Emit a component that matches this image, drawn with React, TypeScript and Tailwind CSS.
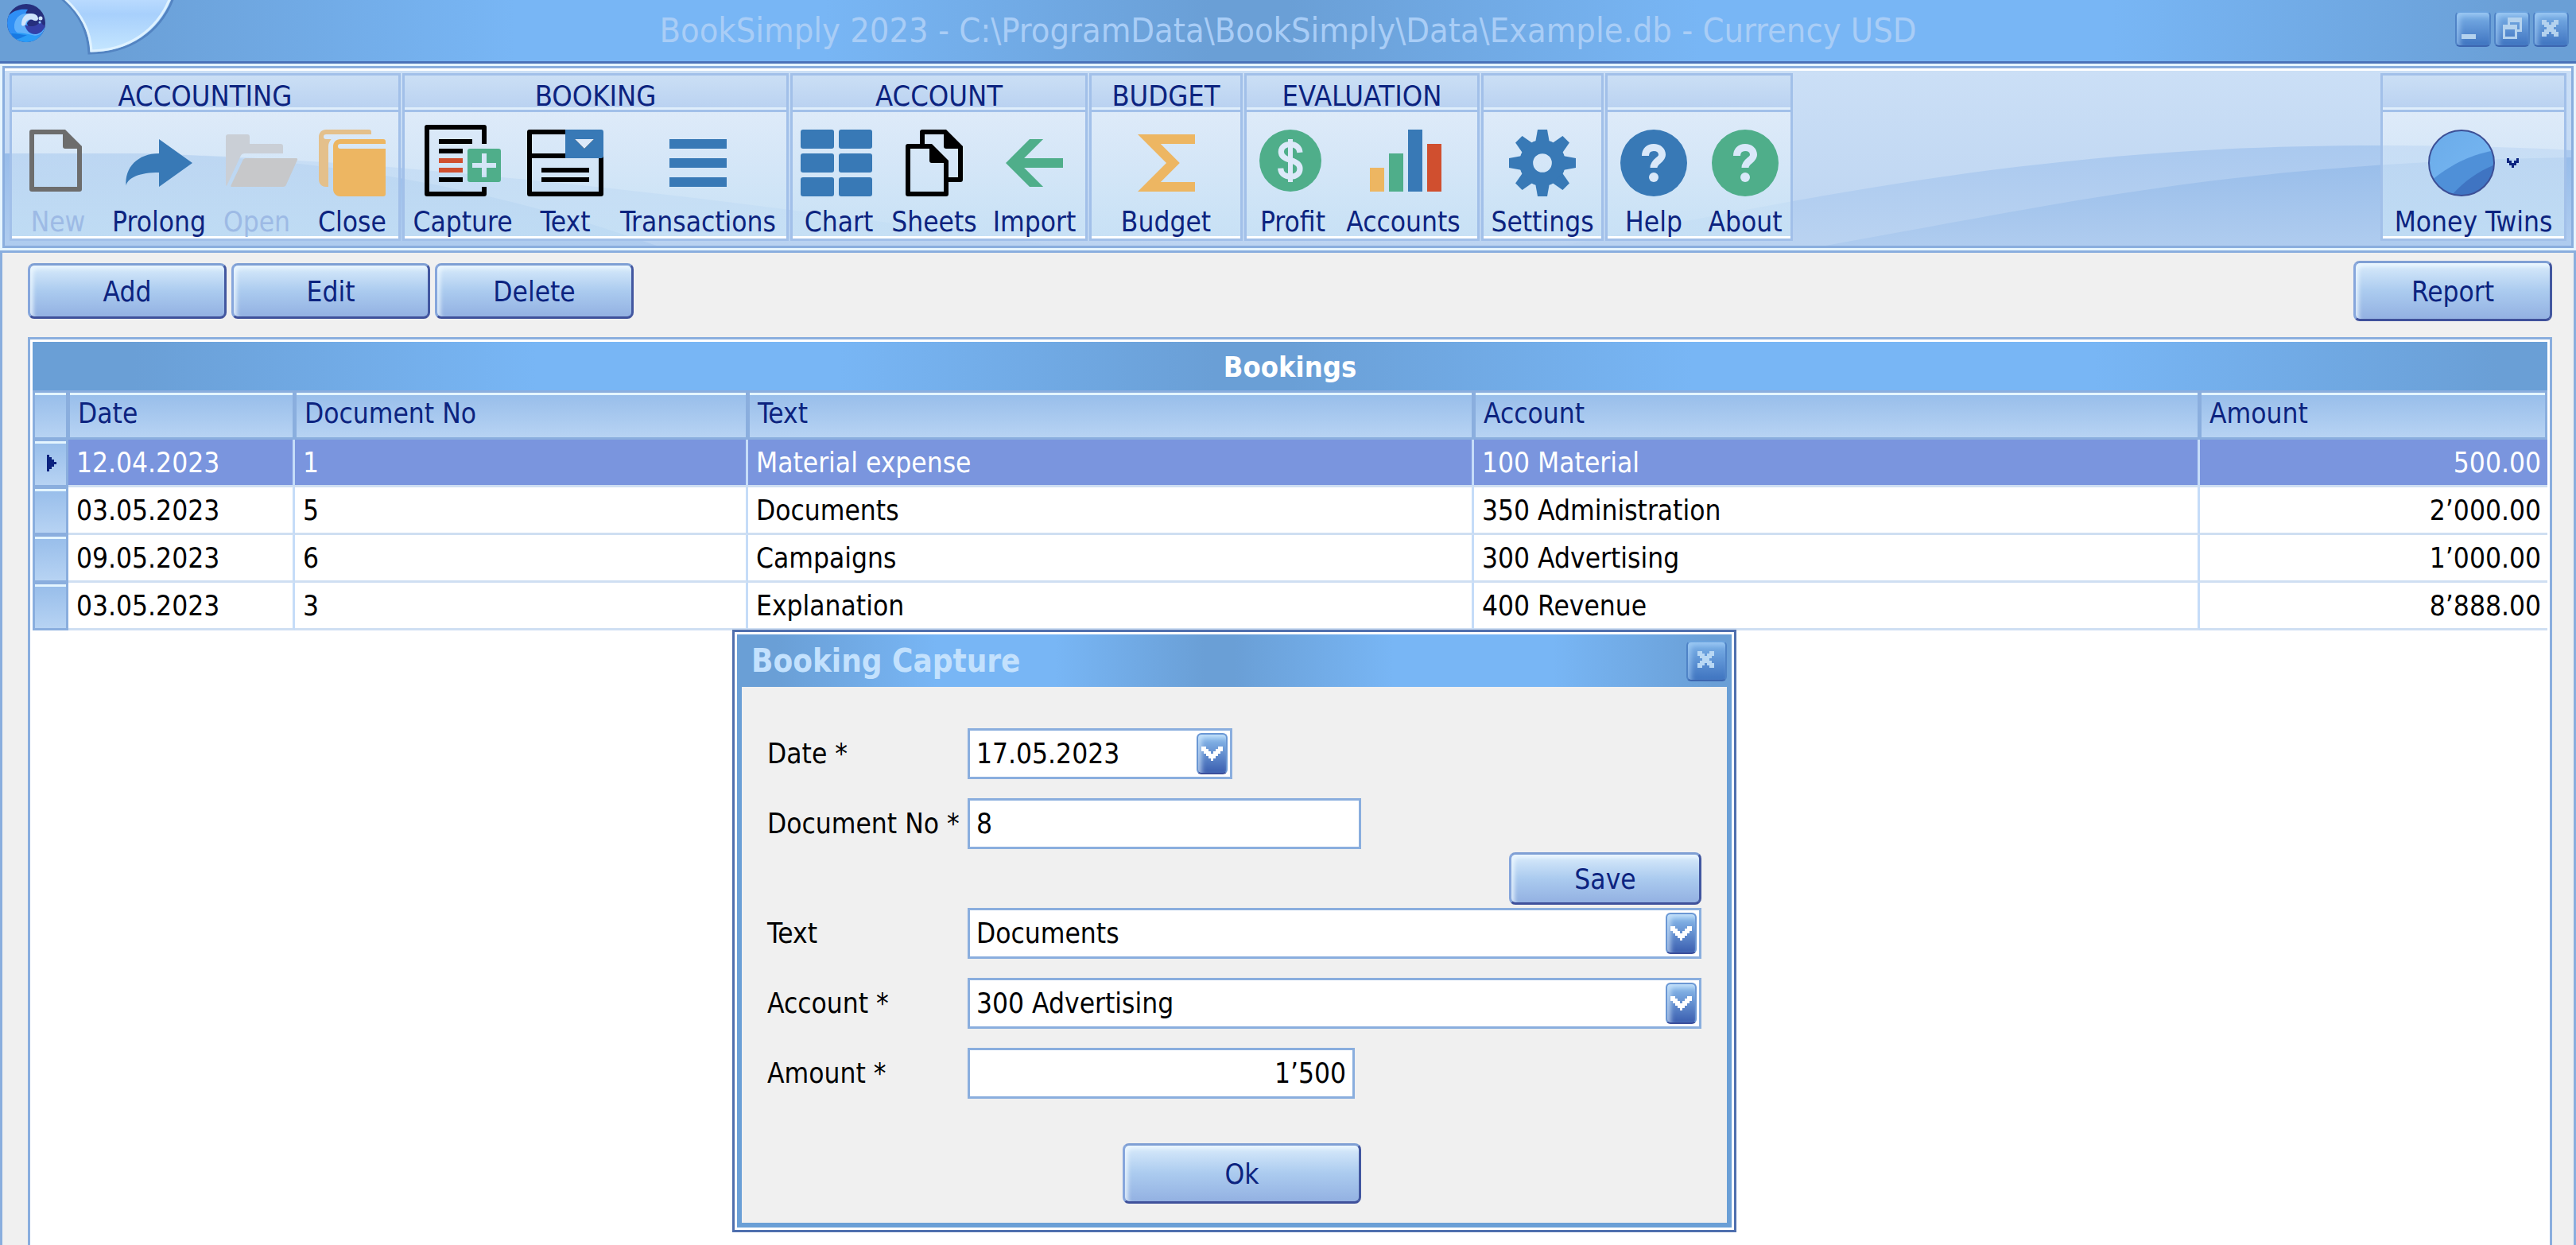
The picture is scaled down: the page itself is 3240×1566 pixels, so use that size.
import type { ReactNode } from "react";
import clsx from "clsx";

interface Tool {
  label: string;
  icon: ReactNode;
  className: string;
  disabled?: boolean;
}

interface ToolGroup {
  title: string;
  tools: Tool[];
}

interface Booking {
  id: number;
  date: string;
  documentNo: string;
  text: string;
  account: string;
  amount: string;
}

const BLUE = "#3879b6";
const GREEN = "#4fae8a";
const RED = "#d04f2f";
const YELLOW = "#edb662";

function Icon({ children }: { children: ReactNode }) {
  return (
    <svg
      viewBox="0 0 32 32"
      className="size-24 shrink-0 overflow-visible"
      aria-hidden="true"
    >
      {children}
    </svg>
  );
}

function NewIcon() {
  return (
    <Icon>
      <path
        fill="#6d6d6d"
        fillRule="evenodd"
        d="M5 2h14l7 7v18a1 1 0 0 1-1 1H5a1 1 0 0 1-1-1V3a1 1 0 0 1 1-1zM6 4v22h18V10h-5a1 1 0 0 1-1-1V4z"
      />
    </Icon>
  );
}

function ProlongIcon() {
  return (
    <Icon>
      <path
        fill={BLUE}
        d="M16 6l14 10-14 10v-6C8 20 3 22 2.2 25.500C1.500 18 7 12 16 12z"
      />
    </Icon>
  );
}

function OpenIcon() {
  return (
    <Icon>
      <path
        fill="#cacfd6"
        d="M4 4h8a1 1 0 0 1 1 1v3h13a1 1 0 0 1 1 1v3H11a2 2 0 0 0-1.800 1.100L3.400 25.500H3V5a1 1 0 0 1 1-1z"
      />
      <path
        fill="#c7c8ca"
        d="M11.400 14h21.100c.6 0 .7.300.400.900l-4.600 10.300c-.3.600-.6.800-1.300.800H5.600c-.5 0-.6-.2-.4-.700l4.900-10.400c.3-.6.6-.9 1.300-.9z"
      />
    </Icon>
  );
}

function CloseIcon() {
  return (
    <Icon>
      <path
        fill="#e4c08b"
        d="M5 2h18a1 1 0 0 1 1 1v1H5a1 1 0 0 0 0 2h2.200C6.400 7 6 8 6 9v17H5c-2 0-3-1.600-3-3V5c0-1.700 1.300-3 3-3z"
      />
      <path
        fill={YELLOW}
        d="M11 6h18a1 1 0 0 1 1 1v1H11a1 1 0 0 0 0 2h19v19a1 1 0 0 1-1 1H11c-2 0-3-1.600-3-3V9c0-1.700 1.300-3 3-3z"
      />
    </Icon>
  );
}

function CaptureIcon() {
  return (
    <Icon>
      <path
        d="M26 8V1a1 1 0 0 0-1-1H1a1 1 0 0 0-1 1v28a1 1 0 0 0 1 1h24a1 1 0 0 0 1-1v-3h-2v2H2V2h22v6z"
        fill="#000"
      />
      <path fill="#000" d="M6 6h14v2H6zM6 10h10v2H6zM6 22h10v2H6z" />
      <path fill={RED} d="M6 14h10v2H6zM6 18h10v2H6z" />
      <path
        fill={GREEN}
        fillRule="evenodd"
        d="M19 10h12a1 1 0 0 1 1 1v12a1 1 0 0 1-1 1H19a1 1 0 0 1-1-1V11a1 1 0 0 1 1-1zM24 12v4h-4v2h4v4h2v-4h4v-2h-4v-4z"
      />
    </Icon>
  );
}

function TextIcon() {
  return (
    <Icon>
      <path
        fill="#000"
        fillRule="evenodd"
        d="M1 2h30v27a1 1 0 0 1-1 1H1a1 1 0 0 1-1-1V3a1 1 0 0 1 1-1zM2 4v8h14V4zM2 14v14h28V14z"
      />
      <path fill="#000" d="M30 12h2v17a1 1 0 0 1-1 1h-1zM6 18h20v2H6zM6 22h20v2H6z" />
      <path
        fill={BLUE}
        fillRule="evenodd"
        d="M16 2h15a1 1 0 0 1 1 1v10a1 1 0 0 1-1 1H16zM20 6l4 4 4-4z"
      />
      <path fill="#dce9f9" d="M20 6l4 4 4-4z" />
    </Icon>
  );
}

function TransactionsIcon() {
  return (
    <Icon>
      <path fill={BLUE} d="M4 6h24v4H4zM4 14h24v4H4zM4 22h24v4H4z" />
    </Icon>
  );
}

function ChartIcon() {
  return (
    <Icon>
      {[2, 12, 22].map((y) => (
        <g key={y} fill={BLUE}>
          <rect x="0" y={y} width="14" height="8" rx="1" />
          <rect x="16" y={y} width="14" height="8" rx="1" />
        </g>
      ))}
    </Icon>
  );
}

function SheetsIcon() {
  return (
    <Icon>
      <path
        fill="#000"
        d="M11 2h10l7 7v14a1 1 0 0 1-1 1h-5v-2h4V10h-5a1 1 0 0 1-1-1V4h-8v4h-2V3a1 1 0 0 1 1-1z"
      />
      <path
        fill="#000"
        fillRule="evenodd"
        d="M5 8h10l7 7v14a1 1 0 0 1-1 1H5a1 1 0 0 1-1-1V9a1 1 0 0 1 1-1zM6 10v18h14V16h-5a1 1 0 0 1-1-1v-5z"
      />
    </Icon>
  );
}

function ImportIcon() {
  return (
    <Icon>
      <path fill={GREEN} d="M4 16L14 6h5.700l-8 8H28v4H11.700l8 8H14z" />
    </Icon>
  );
}

function BudgetIcon() {
  return (
    <Icon>
      <path fill={YELLOW} d="M4 4h24v4H13.600l8 8-8 8H28v4H4l12-12z" />
    </Icon>
  );
}

function ProfitIcon() {
  return (
    <Icon>
      <circle cx="15" cy="15" r="13" fill={GREEN} />
      <g fill="none" stroke="#dce9f9" strokeWidth="2.400">
        <path d="M19 11.600c-.2-2.200-1.700-3.400-4-3.400s-3.900 1.100-3.900 3.100c0 1.900 1.400 2.800 3.900 3.500s4 1.600 4 3.600-1.600 3.300-4 3.300-4-1.300-4.100-3.500" />
        <path strokeWidth="2" d="M15 6v18" />
      </g>
    </Icon>
  );
}

function AccountsIcon() {
  return (
    <Icon>
      <path fill={YELLOW} d="M2 18h6v10H2z" />
      <path fill={GREEN} d="M10 12h6v16h-6z" />
      <path fill={BLUE} d="M18 2h6v26h-6z" />
      <path fill={RED} d="M26 8h6v20h-6z" />
    </Icon>
  );
}

function SettingsIcon() {
  return (
    <Icon>
      <circle cx="16" cy="16" r="6.800" fill="none" stroke={BLUE} strokeWidth="5.700" />
      {[0, 45, 90, 135, 180, 225, 270, 315].map((angle) => (
        <path
          key={angle}
          fill={BLUE}
          d="M14 2h4l.9 5h-5.800z"
          transform={`rotate(${angle} 16 16)`}
        />
      ))}
    </Icon>
  );
}

function QuestionIcon({ color }: { color: string }) {
  return (
    <Icon>
      <circle cx="16" cy="16" r="14" fill={color} />
      <path
        d="M12.500 13c0-2.300 1.400-3.500 3.500-3.500s3.500 1.200 3.500 3.100c0 2.300-3.500 2.500-3.500 5.400"
        fill="none"
        stroke="#d9e8f9"
        strokeWidth="3"
      />
      <circle cx="16" cy="22" r="2" fill="#d9e8f9" />
    </Icon>
  );
}

function OrbIcon() {
  return (
    <svg viewBox="0 0 84 84" className="size-[84px]" aria-hidden="true">
      <defs>
        <linearGradient id="orb-base" x1="0" y1="0" x2="1" y2="1">
          <stop offset="0" stopColor="#6aabe9" />
          <stop offset="1" stopColor="#79b9f4" />
        </linearGradient>
        <clipPath id="orb-clip">
          <circle cx="42" cy="42" r="41" />
        </clipPath>
      </defs>
      <g clipPath="url(#orb-clip)">
        <rect width="84" height="84" fill="url(#orb-base)" />
        <path d="M4 64C26 46 50 32 84 26v58H4z" fill="#4f90d8" />
        <path d="M30 82C46 64 64 52 84 44v40z" fill="#3f74c2" />
      </g>
      <circle cx="42" cy="42" r="41" fill="none" stroke="#3c4f96" strokeWidth="2" />
    </svg>
  );
}

function AppLogo() {
  return (
    <svg viewBox="0 0 48 48" className="size-12" aria-hidden="true">
      <defs>
        <clipPath id="logo-clip">
          <circle cx="24" cy="24" r="24" />
        </clipPath>
      </defs>
      <g clipPath="url(#logo-clip)">
        <rect width="48" height="48" fill="#262f7d" />
        <path d="M0 16C8 8 16 6 26 7c-4 4-4 12 0 20 2 8 14 10 22 2v19H0z" fill="#2f8ff5" />
        <path d="M9 30c-1-12 8-19 17-18 6 0 10 1 12 4-8 2-14 6-14 12s4 11 12 10c4 0 8-3 11-7-2 6-8 9-14 9-12 1-23-2-24-10z" fill="#61b1fb" />
        <path d="M22 26c2 8 7 12 14 12 6-1 10-5 12-11-4 0-4-3-6-5-4 6-12 8-20 4z" fill="#3540a8" />
        <path d="M18 26c0-8 4-14 12-14 6 0 9 3 9 7-1 3-4 2-5 2-5-3-10-1-11 5-2 2-4 2-5 0z" fill="#cfe4fb" />
        <path d="M5 37c10-2 22 1 30 3 4 1 8-1 11-4-4 8-12 12-22 12C16 48 9 44 5 37z" fill="#2b9cf7" />
        <path d="M5 37c8 0 14 2 20 2-6 3-10 5-14 5-3-2-5-4-6-7z" fill="#1779e2" />
        <circle cx="42" cy="18" r="2.500" fill="#cfe4fb" />
        <circle cx="41" cy="23" r="1.500" fill="#8fc6fb" />
      </g>
    </svg>
  );
}

const groups: ToolGroup[] = [
  {
    title: "ACCOUNTING",
    tools: [
      { label: "New", icon: <NewIcon />, className: "w-[116px]", disabled: true },
      { label: "Prolong", icon: <ProlongIcon />, className: "w-[138px]" },
      { label: "Open", icon: <OpenIcon />, className: "w-[108px]", disabled: true },
      { label: "Close", icon: <CloseIcon />, className: "ml-2 w-[116px]" },
    ],
  },
  {
    title: "BOOKING",
    tools: [
      { label: "Capture", icon: <CaptureIcon />, className: "w-[146px]" },
      { label: "Text", icon: <TextIcon />, className: "w-[112px]" },
      { label: "Transactions", icon: <TransactionsIcon />, className: "w-[222px]" },
    ],
  },
  {
    title: "ACCOUNT",
    tools: [
      { label: "Chart", icon: <ChartIcon />, className: "w-[116px]" },
      { label: "Sheets", icon: <SheetsIcon />, className: "w-[124px]" },
      { label: "Import", icon: <ImportIcon />, className: "w-[128px]" },
    ],
  },
  {
    title: "BUDGET",
    tools: [{ label: "Budget", icon: <BudgetIcon />, className: "w-[187px]" }],
  },
  {
    title: "EVALUATION",
    tools: [
      { label: "Profit", icon: <ProfitIcon />, className: "w-[116px]" },
      { label: "Accounts", icon: <AccountsIcon />, className: "mr-3 w-[162px]" },
    ],
  },
  {
    title: "",
    tools: [{ label: "Settings", icon: <SettingsIcon />, className: "w-[148px]" }],
  },
  {
    title: "",
    tools: [
      { label: "Help", icon: <QuestionIcon color={BLUE} />, className: "w-[116px]" },
      { label: "About", icon: <QuestionIcon color={GREEN} />, className: "w-[114px]" },
    ],
  },
];

const bookings: Booking[] = [
  { id: 1, date: "12.04.2023", documentNo: "1", text: "Material expense", account: "100 Material", amount: "500.00" },
  { id: 2, date: "03.05.2023", documentNo: "5", text: "Documents", account: "350 Administration", amount: "2’000.00" },
  { id: 3, date: "09.05.2023", documentNo: "6", text: "Campaigns", account: "300 Advertising", amount: "1’000.00" },
  { id: 4, date: "03.05.2023", documentNo: "3", text: "Explanation", account: "400 Revenue", amount: "8’888.00" },
];

const titleGradient =
  "bg-[linear-gradient(to_right,#6a9fd6_0%,#6a9fd6_4%,#78b6f5_20%,#78b6f5_32%,#6a9fd6_47%,#6a9fd6_50%,#78b6f5_66%,#78b6f5_82%,#6a9fd6_98%)]";

const selectedId = 1;

function GroupBox({ title, children }: { title: string; children: ReactNode }) {
  return (
    <section className="border-3 border-[#a2c0e9]">
      <h2 className="h-[43px] border-b-3 border-[#dfeefb] bg-linear-to-b from-[#cbdff5] to-[#bad2f1] pt-2 text-center text-4xl leading-9">
        {title}
      </h2>
      <div className="flex h-[162px] border-t-3 border-b-3 border-t-[#a2c0e9] border-b-white bg-linear-to-b from-white/40 to-[#d5f0fa]/45 pt-4">
        {children}
      </div>
    </section>
  );
}

function ToolButton({ tool }: { tool: Tool }) {
  return (
    <button
      type="button"
      disabled={tool.disabled}
      className={clsx(
        "flex flex-col items-center disabled:text-[#9dbae5]",
        tool.className
      )}
    >
      {tool.icon}
      <span className="mt-1 text-[35px] leading-11 whitespace-nowrap">{tool.label}</span>
    </button>
  );
}

function PushButton({ label, className }: { label: string; className: string }) {
  return (
    <button
      type="button"
      className={clsx(
        "rounded-lg border-3 border-t-[#7f9fd4] border-r-[#4257a0] border-b-[#3f519b] border-l-[#86a6dc] bg-linear-to-b from-[#d9ebfb] via-[#abcbef] to-[#93b1e2] pt-0.5 text-[35px] leading-10 text-[#0c237f] shadow-[inset_4px_4px_5px_rgba(240,250,255,0.75)]",
        className
      )}
    >
      {label}
    </button>
  );
}

function WindowButton({ label, className, children }: { label: string; className: string; children: ReactNode }) {
  return (
    <button
      type="button"
      aria-label={label}
      className={clsx(
        "flex items-center justify-center rounded-md border-2 border-[#4f83c6] border-t-[#6ba3de] border-b-[#3c66b0] bg-linear-to-b from-[#7db2e8] to-[#3f74c0] shadow-[inset_4px_4px_6px_rgba(175,215,250,0.6)]",
        className
      )}
    >
      <svg viewBox="0 0 14 14" className="size-[42px] shrink-0" shapeRendering="crispEdges" aria-hidden="true">
        {children}
      </svg>
    </button>
  );
}

const crossPixels =
  "M3 3h2v1h1v1h1V4h1V3h2v2H9v1H8v1h1v1h1v2H8V9H7V8H6v1H5v1H3V8h1V7h1V6H4V5H3z";

function DropGlyph() {
  return (
    <span className="flex h-[52px] w-[39px] items-center justify-center rounded-md border-2 border-[#6a97d4] border-b-[#3b4f9c] bg-linear-to-b from-[#8fc0ee] to-[#3c5fb0] shadow-[inset_4px_4px_6px_rgba(220,240,255,0.7)]">
      <svg viewBox="0 0 9 6" className="h-[18px] w-[27px]" shapeRendering="crispEdges" aria-hidden="true">
        <path d="M0 0h2v1h1v1h1v1h1V2h1V1h1V0h2v2H8v1H7v1H6v1H5v1H4V5H3V4H2V3H1V2H0z" fill="#fff" />
      </svg>
    </span>
  );
}

function FieldRow({ id, label, className, children }: { id: string; label: string; className?: string; children: ReactNode }) {
  return (
    <div className={clsx("flex items-center", className)}>
      <label htmlFor={id} className="w-[252px] shrink-0 whitespace-nowrap">
        {label}
      </label>
      {children}
    </div>
  );
}

function SelectField({ id, options, value }: { id: string; options: string[]; value: string }) {
  return (
    <div className="relative grow">
      <select
        id={id}
        defaultValue={value}
        className="h-16 w-full appearance-none border-3 border-[#8aaede] bg-white px-2 text-black"
      >
        {options.map((option) => (
          <option key={option}>{option}</option>
        ))}
      </select>
      <span className="pointer-events-none absolute top-1.5 right-1.5">
        <DropGlyph />
      </span>
    </div>
  );
}

function BookingDialog() {
  return (
    <div
      role="dialog"
      aria-labelledby="capture-title"
      className="absolute top-[792px] left-[921px] w-[1263px] border-3 border-[#4f6fae] bg-white p-[3px] text-[35px] text-black"
    >
      <div className="border-6 border-t-0 border-[#6a9fd6]">
        <div className={clsx("-mx-1.5 flex h-[66px] items-center justify-between pr-1.5 pl-[18px]", titleGradient)}>
          <h2 id="capture-title" className="text-[40px] font-bold text-[#c3e1fd]">
            Booking Capture
          </h2>
          <WindowButton label="Close dialog" className="size-[51px]">
            <path d={crossPixels} fill="#b9d8f4" />
          </WindowButton>
        </div>
        <form className="flex flex-col bg-[#f0f0f0] px-8 pt-[52px] pb-6" onSubmit={(e) => e.preventDefault()}>
          <FieldRow id="date" label="Date *">
            <div className="flex h-16 w-[333px] items-center justify-between border-3 border-[#8aaede] bg-white pr-[3px]">
              <input id="date" defaultValue="17.05.2023" className="w-60 bg-transparent px-2 outline-none" />
              <button type="button" aria-label="Open calendar">
                <DropGlyph />
              </button>
            </div>
          </FieldRow>
          <FieldRow id="documentNo" label="Document No *" className="mt-6">
            <input
              id="documentNo"
              defaultValue="8"
              className="h-16 w-[495px] border-3 border-[#8aaede] bg-white px-2"
            />
          </FieldRow>
          <PushButton label="Save" className="mt-1 h-[66px] w-[242px] self-end" />
          <FieldRow id="text" label="Text" className="mt-1">
            <SelectField id="text" value="Documents" options={bookings.map((b) => b.text)} />
          </FieldRow>
          <FieldRow id="account" label="Account *" className="mt-6">
            <SelectField id="account" value="300 Advertising" options={bookings.map((b) => b.account)} />
          </FieldRow>
          <FieldRow id="amount" label="Amount *" className="mt-6">
            <input
              id="amount"
              defaultValue="1’500"
              className="h-16 w-[487px] border-3 border-[#8aaede] bg-white px-2 text-right"
            />
          </FieldRow>
          <div className="mt-14 flex w-[747px] justify-end">
            <PushButton label="Ok" className="h-[76px] w-[300px]" />
          </div>
        </form>
      </div>
    </div>
  );
}

const headCell =
  "border-t-3 border-b-3 border-r-3 border-l-2 border-[#8aaede] bg-linear-to-b from-[#97bdea] to-[#b7d3f3] px-2.5 pb-1 text-left font-normal text-[#0c237f] shadow-[inset_0_3px_0_#e4f5ff]";

function BookingsTable() {
  return (
    <div className="grow border-3 border-b-0 border-[#8aaede] bg-white px-[3px] pt-[3px]">
      <h1
        id="bookings-title"
        className={clsx("flex h-[61px] items-center justify-center pt-0.5 text-4xl font-bold text-white", titleGradient)}
      >
        Bookings
      </h1>
      <table aria-labelledby="bookings-title" className="w-full table-fixed border-separate border-spacing-0 text-[35px] leading-10">
        <colgroup>
          <col className="w-[45px]" />
          <col className="w-[285px]" />
          <col className="w-[570px]" />
          <col className="w-[913px]" />
          <col className="w-[913px]" />
          <col />
        </colgroup>
        <thead>
          <tr className="h-[62px]">
            <td className="border-3 border-[#8aaede] bg-linear-to-b from-[#97bdea] to-[#b7d3f3] shadow-[inset_0_3px_0_#e4f5ff]" />
            <th className={headCell}>Date</th>
            <th className={headCell}>Document No</th>
            <th className={headCell}>Text</th>
            <th className={headCell}>Account</th>
            <th className={headCell}>Amount</th>
          </tr>
        </thead>
        <tbody>
          {bookings.map((b) => {
            const selected = b.id === selectedId;
            const cell = clsx(
              "border-b-3 border-r-[#c5dcf8] border-b-[#cfdff2] pl-2.5",
              selected ? "bg-[#7a95de] text-white" : "bg-white text-black"
            );
            return (
              <tr key={b.id} className="h-[60px]">
                <td className="border-x-3 border-t-2 border-b-3 border-[#8aaede] bg-linear-to-b from-[#97bdea] to-[#b7d3f3] shadow-[inset_0_3px_0_#e4f5ff]">
                  {selected && (
                    <svg viewBox="0 0 4 7" className="ml-[15px] h-[21px] w-3" shapeRendering="crispEdges" aria-hidden="true">
                      <path d="M0 0h1v1h1v1h1v1h1v1H3v1H2v1H1v1H0z" fill="#0c237f" />
                    </svg>
                  )}
                </td>
                <td className={clsx(cell, "border-r-3")}>{b.date}</td>
                <td className={clsx(cell, "border-r-3")}>{b.documentNo}</td>
                <td className={clsx(cell, "border-r-3")}>{b.text}</td>
                <td className={clsx(cell, "border-r-3")}>{b.account}</td>
                <td className={clsx(cell, "pr-2 text-right")}>{b.amount}</td>
              </tr>
            );
          })}
        </tbody>
      </table>
    </div>
  );
}

function TitleBar() {
  return (
    <header className={clsx("relative flex h-20 items-center border-b-3 border-[#4a72b8] pr-[9px] pb-1 pl-[9px]", titleGradient)}>
      <div className="w-36 pb-4">
        <AppLogo />
      </div>
      <svg viewBox="0 0 150 70" className="absolute top-0 left-[74px] h-[70px] w-[150px]" aria-hidden="true">
        <defs>
          <linearGradient id="swoosh" x1="0" y1="0" x2="0" y2="1">
            <stop offset="0" stopColor="#bcdcff" />
            <stop offset="0.300" stopColor="#a8d0fc" />
            <stop offset="1" stopColor="#c6e7ff" />
          </linearGradient>
        </defs>
        <path d="M2 -3C26 16 37 40 38 67C90 67 128 40 144 -3z" fill="url(#swoosh)" stroke="#5384c2" strokeWidth="3" />
        <path d="M6 -3C30 18 40 42 41 64C88 63 124 38 140 -3z" fill="none" stroke="#dff2ff" strokeWidth="3" />
      </svg>
      <p className="grow pt-1 text-center text-[43px] leading-none text-[#a9cdf6]">
        BookSimply 2023 - C:\ProgramData\BookSimply\Data\Example.db - Currency USD
      </p>
      <div className="flex w-36 justify-end gap-1">
        <WindowButton label="Minimize" className="size-[45px]">
          <path d="M2 9h6v2H2z" fill="#b4d2ee" />
        </WindowButton>
        <WindowButton label="Restore" className="size-[45px]">
          <path
            fill="#b4d2ee"
            fillRule="evenodd"
            d="M5 2h6v6H9v3H3V5h2zM6 4v1h3v2h1V4zM4 7v3h4V7z"
          />
        </WindowButton>
        <WindowButton label="Close" className="size-[45px]">
          <path d={crossPixels} fill="#b4d2ee" />
        </WindowButton>
      </div>
    </header>
  );
}

// Soft waves behind the ribbon groups
function RibbonWaves() {
  return (
    <svg
      viewBox="0 0 3228 220"
      preserveAspectRatio="none"
      className="absolute inset-0 h-full w-full"
      aria-hidden="true"
    >
      <defs>
        <linearGradient id="wave-back" x1="0" y1="0" x2="0" y2="1">
          <stop offset="0" stopColor="#aac9ef" />
          <stop offset="1" stopColor="#bad3f1" />
        </linearGradient>
        <linearGradient id="wave-front" x1="0" y1="0" x2="0" y2="1">
          <stop offset="0" stopColor="#98bdea" />
          <stop offset="1" stopColor="#afccef" />
        </linearGradient>
      </defs>
      <path d="M0 104H170C500 112 900 160 1320 220H0z" fill="url(#wave-back)" />
      <path d="M0 104H170C420 110 620 150 820 220H0z" fill="url(#wave-front)" />
      <path d="M1960 220C2400 130 2650 94 2988 94C3080 94 3160 96 3228 100V220z" fill="url(#wave-back)" />
      <path d="M2290 220C2600 165 2800 116 3228 109V220z" fill="url(#wave-front)" />
    </svg>
  );
}

function Ribbon() {
  return (
    <nav className="bg-[#e6f5ff] p-[3px]">
      <div className="border-3 border-[#8aaede]">
        <div className="relative border-t-3 border-white bg-linear-to-b from-[#cbdff6] to-[#bcd4f1]">
          <RibbonWaves />
          <div className="relative flex gap-[2px] px-1.5 pt-[3px] pb-1.5">
            {groups.map((group, i) => (
              <GroupBox key={i} title={group.title}>
                {group.tools.map((tool) => (
                  <ToolButton key={tool.label} tool={tool} />
                ))}
              </GroupBox>
            ))}
            <div className="ml-auto">
              <GroupBox title="">
                <button type="button" className="flex w-[228px] flex-col items-center">
                  <span className="flex h-24 shrink-0 items-center gap-[15px]">
                    <OrbIcon />
                    <svg viewBox="0 0 5 4" className="h-3 w-[15px]" shapeRendering="crispEdges" aria-hidden="true">
                      <path d="M0 0h1v1h1v1h1V1h1V0h1v2H4v1H3v1H2V3H1V2H0z" fill="#0c237f" />
                    </svg>
                  </span>
                  <span className="mt-1 text-[35px] leading-11 whitespace-nowrap">Money Twins</span>
                </button>
              </GroupBox>
            </div>
          </div>
        </div>
      </div>
    </nav>
  );
}

export default function App() {
  return (
    <div className="relative flex min-h-screen flex-col bg-[#f0f0f0] font-['DejaVu_Sans_Condensed','DejaVu_Sans',sans-serif] text-[#0c237f]">
      <TitleBar />
      <Ribbon />
      <main className="flex grow flex-col border-3 border-b-0 border-[#8aaede] pr-[27px] pl-8">
        <div className="flex items-center gap-1.5 pt-2.5 pb-5">
          <PushButton label="Add" className="h-[70px] w-[250px]" />
          <PushButton label="Edit" className="h-[70px] w-[250px]" />
          <PushButton label="Delete" className="h-[70px] w-[250px]" />
          <PushButton label="Report" className="ml-auto h-[76px] w-[250px]" />
        </div>
        <BookingsTable />
      </main>
      <BookingDialog />
    </div>
  );
}
